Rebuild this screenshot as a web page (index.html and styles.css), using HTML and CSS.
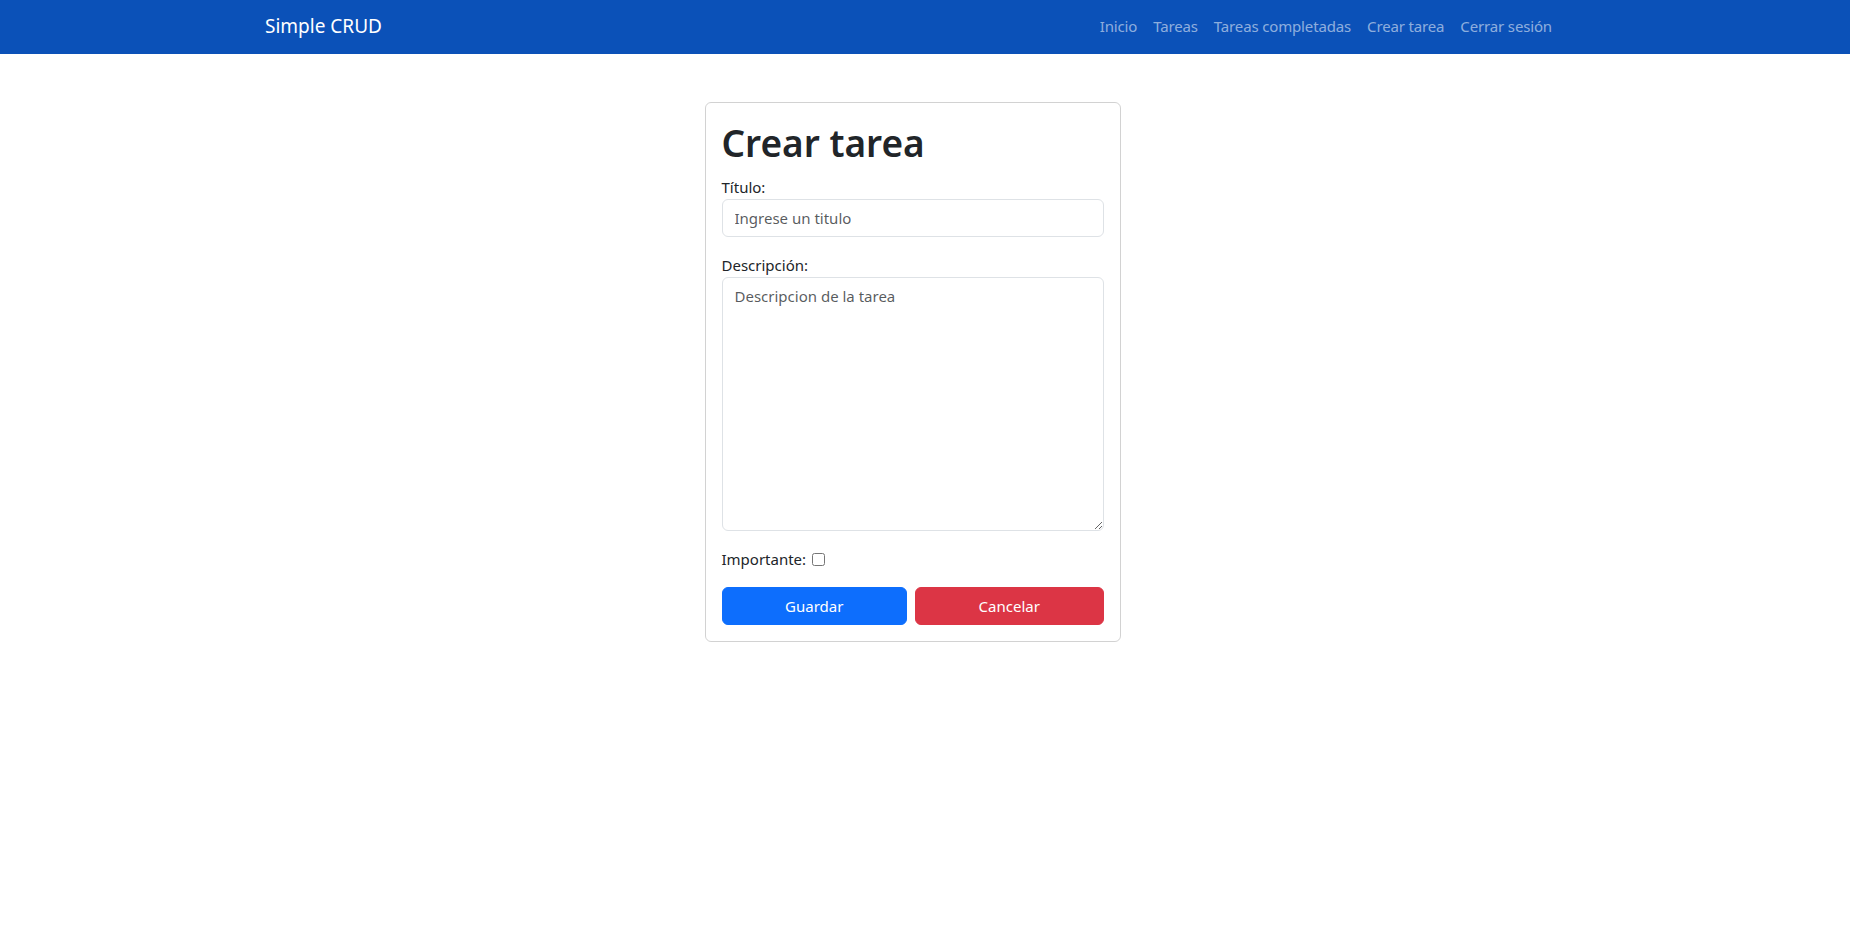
FILE: index.html
```html
<!DOCTYPE html>
<html lang="es">
<head>
<meta charset="utf-8">
<title>Simple CRUD</title>
<link rel="stylesheet" href="styles.css">
</head>
<body>
<nav class="navbar">
  <div class="container nav-inner">
    <a class="brand" href="#">Simple CRUD</a>
    <ul class="nav-links">
      <li><a href="#">Inicio</a></li>
      <li><a href="#">Tareas</a></li>
      <li><a href="#">Tareas completadas</a></li>
      <li><a href="#">Crear tarea</a></li>
      <li><a href="#">Cerrar sesión</a></li>
    </ul>
  </div>
</nav>
<main class="container main">
  <div class="card">
    <h1 class="title">Crear tarea</h1>
    <form class="form">
      <div class="field">
        <label class="label" for="title">Título:</label>
        <input class="control" id="title" type="text" placeholder="Ingrese un titulo">
      </div>
      <div class="field">
        <label class="label" for="desc">Descripción:</label>
        <textarea class="control" id="desc" rows="10" placeholder="Descripcion de la tarea"></textarea>
      </div>
      <div class="field">
        <label class="label" for="imp">Importante:</label>
        <input class="check" id="imp" type="checkbox">
      </div>
      <div class="actions">
        <button class="btn btn-primary" type="button">Guardar</button>
        <button class="btn btn-danger" type="button">Cancelar</button>
      </div>
    </form>
  </div>
</main>
</body>
</html>
```
FILE: styles.css
```css
* { box-sizing: border-box; }
html, body { margin: 0; padding: 0; }
body {
  font-family: "Noto Sans", "Open Sans", "Liberation Sans", sans-serif;
  font-size: 15px;
  line-height: 24px;
  color: #212529;
  background: #fff;
}
.container {
  max-width: 1320px;
  margin: 0 auto;
  padding: 0 25px 0 0;
}
.navbar {
  background: #0b51b8;
  height: 54px;
}
.nav-inner {
  height: 54px;
  display: flex;
  align-items: center;
  justify-content: space-between;
}
.brand {
  color: #fff;
  text-decoration: none;
  font-size: 19px;
  line-height: 30px;
  margin-top: -2px;
}
.nav-links {
  list-style: none;
  margin: -2px 0 0;
  padding: 0;
  display: flex;
}
.nav-links a {
  display: block;
  padding: 8px;
  color: rgba(255,255,255,0.55);
  text-decoration: none;
  line-height: 24px;
  letter-spacing: -0.01em;
}
.main {
  display: flex;
  justify-content: center;
  padding-top: 48px;
}
.card {
  width: 416px;
  border: 1px solid rgba(0,0,0,0.175);
  border-radius: 6px;
  padding: 16px;
}
.title {
  margin: 0 0 8px;
  font-size: 37px;
  font-weight: 600;
  line-height: 48px;
}
.form { margin: 0; }
.field { margin-bottom: 16px; }
.label { display: inline-block; }
.control {
  display: block;
  width: 100%;
  padding: 6px 12px;
  font: inherit;
  line-height: 24px;
  color: #212529;
  border: 1px solid #dee2e6;
  border-radius: 6px;
  background: #fff;
}
.control::placeholder { color: rgba(33,37,41,0.75); }
textarea.control { resize: vertical; height: 254px; }
.check {
  width: 13px;
  height: 13px;
  margin: 0 0 0 2px;
  vertical-align: -1px;
}
.actions {
  display: flex;
  gap: 8px;
}
.btn {
  flex: 1 1 auto;
  font: inherit;
  line-height: 24px;
  padding: 6px 12px;
  border: 1px solid transparent;
  border-radius: 6px;
  color: #fff;
  cursor: pointer;
}
.btn-primary { background: #0d6efd; border-color: #0d6efd; }
.btn-danger { background: #dc3545; border-color: #dc3545; }
```
